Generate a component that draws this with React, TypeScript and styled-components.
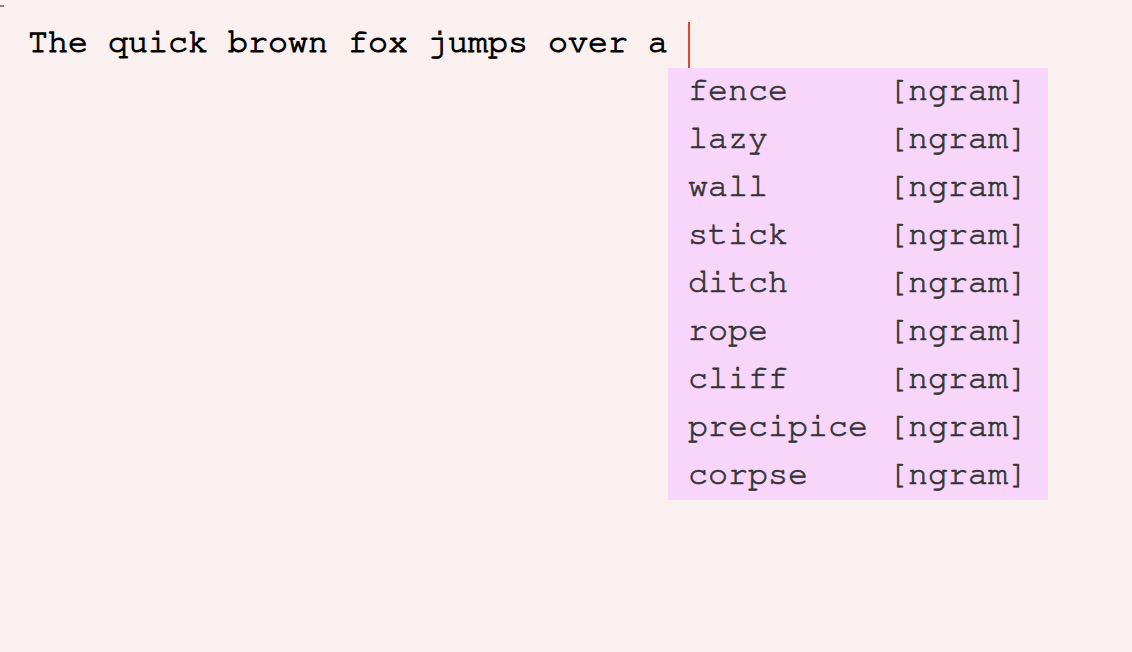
import React from "react";
import styled, { createGlobalStyle } from "styled-components";

const Global = createGlobalStyle`
  html, body {
    margin: 0;
    padding: 0;
    background: #f9f0ef;
    height: 100%;
  }
  #root {
    min-height: 100vh;
    background: #f9f0ef;
  }
`;

const Page = styled.div`
  position: relative;
  min-height: 652px;
  background: #f9f0ef;
  font-family: "Nimbus Mono PS", "Nimbus Mono L", "FreeMono", "Liberation Mono", monospace;
  font-size: 33.33px;
`;

const Mark = styled.div`
  position: absolute;
  left: 0;
  top: 5px;
  width: 4px;
  height: 2px;
  background: #8a8585;
`;

const Editor = styled.div`
  padding: 20px 0 0 28px;
`;

const Line = styled.div`
  display: flex;
  align-items: flex-start;
  height: 48px;
  line-height: 44px;
  white-space: pre;
`;

const Typed = styled.span`
  color: #000;
  -webkit-text-stroke: 1.1px #000;
`;

const CaretWrap = styled.span`
  position: relative;
  display: inline-block;
  height: 48px;
`;

const Caret = styled.span`
  display: block;
  width: 2px;
  height: 46px;
  margin-top: 2px;
  background: #e2442c;
`;

const Popup = styled.div`
  position: absolute;
  top: 48px;
  left: -20px;
  width: 380px;
  box-sizing: border-box;
  padding: 0 20px;
  background: #f8d6fb;
  color: #333;
  -webkit-text-stroke: 0.7px #333;
  display: grid;
  grid-template-columns: 200px auto;
  grid-auto-rows: 48px;
  line-height: 44px;
  white-space: pre;
`;

const Word = styled.span``;
const Tag = styled.span``;

const words = ["fence", "lazy", "wall", "stick", "ditch", "rope", "cliff", "precipice", "corpse"];

export default function App() {
  return (
    <Page>
      <Global />
      <Mark />
      <Editor>
        <Line>
          <Typed>The quick brown fox jumps over a </Typed>
          <CaretWrap>
            <Caret />
            <Popup>
              {words.map((w) => (
                <React.Fragment key={w}>
                  <Word>{w}</Word>
                  <Tag>[ngram]</Tag>
                </React.Fragment>
              ))}
            </Popup>
          </CaretWrap>
        </Line>
      </Editor>
    </Page>
  );
}
